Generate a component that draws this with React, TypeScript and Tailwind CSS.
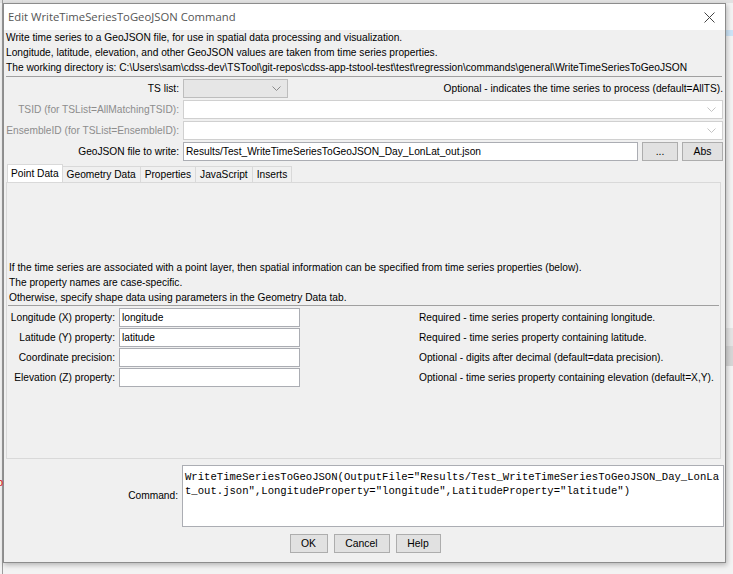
import React from "react";

const ui = "font-['Liberation_Sans',Arial,sans-serif]";

function Chevron({ color = "#9a9a9a" }: { color?: string }) {
  return (
    <svg width="9" height="5" viewBox="0 0 9 5" className="shrink-0">
      <path d="M0.5 0.5 L4.5 4.5 L8.5 0.5" fill="none" stroke={color} strokeWidth="1" />
    </svg>
  );
}

function Combo({ className = "", dim = false }: { className?: string; dim?: boolean }) {
  return (
    <div
      className={`h-[19px] flex items-center justify-end pr-[6px] border ${
        dim ? "bg-white border-[#d0d0d0]" : "bg-[#e6e6e6] border-[#bdbdbd]"
      } ${className}`}
    >
      <Chevron color={dim ? "#c4c4c4" : "#8a8a8a"} />
    </div>
  );
}

function Btn({ children, className = "" }: { children: React.ReactNode; className?: string }) {
  return (
    <div
      className={`h-[19px] flex items-center justify-center bg-[#e1e1e1] border border-[#adadad] text-[10.4px] text-black ${className}`}
    >
      {children}
    </div>
  );
}

function Field({ value = "", className = "" }: { value?: string; className?: string }) {
  return (
    <div
      className={`h-[19px] flex items-center px-[2px] bg-white border border-[#abadb3] text-[10.2px] text-black whitespace-nowrap overflow-hidden ${className}`}
    >
      {value}
    </div>
  );
}

const tabs = ["Point Data", "Geometry Data", "Properties", "JavaScript", "Inserts"];

const props: [string, string, string][] = [
  ["Longitude (X) property:", "longitude", "Required - time series property containing longitude."],
  ["Latitude (Y) property:", "latitude", "Required - time series property containing latitude."],
  ["Coordinate precision:", "", "Optional - digits after decimal (default=data precision)."],
  ["Elevation (Z) property:", "", "Optional - time series property containing elevation (default=X,Y)."],
];

export default function App() {
  return (
    <div className={`relative w-[733px] h-[574px] overflow-hidden bg-[#f3f3f3] ${ui}`}>
      {/* desktop behind the dialog */}
      <div className="absolute left-0 top-0 w-[733px] h-[3px] bg-[#e2e2e2]" />
      <div className="absolute left-[2px] top-0 w-[1px] h-[574px] bg-[#9c9c9c]" />
      <div className="absolute left-[-3px] top-[476px] text-[11px] leading-[12px] text-[#e02020]">
        p<br />i
      </div>
      <div className="absolute left-[726px] top-[30px] w-[7px] h-[6px] bg-[#cce4f7]" />
      <div className="absolute left-[726px] top-[328px] w-[7px] h-[18px] bg-[#e4e4e4]" />
      <div className="absolute left-[726px] top-[346px] w-[7px] h-[20px] bg-[#d6d6d6]" />

      {/* dialog window */}
      <div className="absolute left-[3px] top-[3px] w-[723px] h-[560px] border border-[#8c8c8c] bg-[#f0f0f0] shadow-[1px_2px_5px_rgba(0,0,0,0.25)] flex flex-col">
        {/* title bar */}
        <div className="shrink-0 h-[26px] bg-white flex items-center justify-between pl-[4px] pr-[10px]">
          <span className="font-['Open_Sans',sans-serif] text-[11.3px] text-[#555]">
            Edit WriteTimeSeriesToGeoJSON Command
          </span>
          <svg width="11" height="11" viewBox="0 0 11 11">
            <path d="M0.5 0.5 L10.5 10.5 M10.5 0.5 L0.5 10.5" stroke="#444" strokeWidth="1" />
          </svg>
        </div>

        <div className="flex-1 flex flex-col pl-[2px] pr-[1px] text-[10.2px] text-black">
          {/* description */}
          <div className="shrink-0 leading-[15px] whitespace-nowrap">
            <div>Write time series to a GeoJSON file, for use in spatial data processing and visualization.</div>
            <div>Longitude, latitude, elevation, and other GeoJSON values are taken from time series properties.</div>
            <div>
              The working directory is: C:\Users\sam\cdss-dev\TSTool\git-repos\cdss-app-tstool-test\test\regression\commands\general\WriteTimeSeriesToGeoJSON
            </div>
          </div>
          <div className="shrink-0 mt-[1px] h-[1px] bg-[#a0a0a0] mr-[2px]" />

          {/* main parameters */}
          <div className="shrink-0 grid grid-cols-[173px_1fr] gap-x-[4px] gap-y-[2px] mt-[2px] items-center">
            <div className="text-right">TS list:</div>
            <div className="flex items-center">
              <Combo className="w-[105px]" />
              <div className="flex-1 text-right pr-[1px] whitespace-nowrap">
                Optional - indicates the time series to process (default=AllTS).
              </div>
            </div>
            <div className="text-right text-[#8d8d8d] whitespace-nowrap">TSID (for TSList=AllMatchingTSID):</div>
            <Combo dim className="mr-[1px]" />
            <div className="text-right text-[#8d8d8d] whitespace-nowrap">EnsembleID (for TSList=EnsembleID):</div>
            <Combo dim className="mr-[1px]" />
            <div className="text-right whitespace-nowrap">GeoJSON file to write:</div>
            <div className="flex items-center gap-[4px]">
              <Field value="Results/Test_WriteTimeSeriesToGeoJSON_Day_LonLat_out.json" className="w-[455px]" />
              <Btn className="w-[36px]">...</Btn>
              <Btn className="w-[41px]">Abs</Btn>
            </div>
          </div>

          {/* tabs */}
          <div className="shrink-0 mt-[3px] flex items-end h-[18px] pl-[1px]">
            {tabs.map((t, i) => (
              <div
                key={t}
                className={
                  i === 0
                    ? "h-[18px] px-[3px] flex items-center bg-white border border-b-0 border-[#d9d9d9]"
                    : "h-[16px] px-[4px] flex items-center bg-[#f0f0f0] border border-b-0 border-l-0 border-[#d9d9d9]"
                }
              >
                {t}
              </div>
            ))}
          </div>
          <div className="shrink-0 h-[277px] border border-[#d9d9d9] bg-[#f0f0f0] mr-[3px] flex flex-col">
            <div className="h-[77px]" />
            <div className="leading-[15px] pl-[2px] whitespace-nowrap">
              <div>If the time series are associated with a point layer, then spatial information can be specified from time series properties (below).</div>
              <div>The property names are case-specific.</div>
              <div>Otherwise, specify shape data using parameters in the Geometry Data tab.</div>
            </div>
            <div className="mx-[1px] h-[1px] bg-[#a0a0a0]" />
            <div className="grid grid-cols-[108px_181px_1fr] gap-x-[4px] gap-y-[1px] mt-[2px] items-center">
              {props.map(([label, value, note]) => (
                <React.Fragment key={label}>
                  <div className="text-right whitespace-nowrap">{label}</div>
                  <Field value={value} />
                  <div className="pl-[115px] whitespace-nowrap">{note}</div>
                </React.Fragment>
              ))}
            </div>
          </div>

          {/* command text */}
          <div className="shrink-0 mt-[6px] flex items-center">
            <div className="w-[172px] text-right">Command:</div>
            <div className="ml-[4px] flex-1 h-[62px] bg-white border border-[#abadb3] px-[2px] pt-[4px] font-['Liberation_Mono',monospace] text-[10.6px] leading-[14px] whitespace-pre text-black">
              {'WriteTimeSeriesToGeoJSON(OutputFile="Results/Test_WriteTimeSeriesToGeoJSON_Day_LonLa\nt_out.json",LongitudeProperty="longitude",LatitudeProperty="latitude")'}
            </div>
          </div>

          {/* buttons */}
          <div className="shrink-0 mt-[7px] flex justify-center gap-[6px]">
            <Btn className="w-[38px]">OK</Btn>
            <Btn className="w-[56px]">Cancel</Btn>
            <Btn className="w-[45px]">Help</Btn>
          </div>
        </div>
      </div>
    </div>
  );
}
